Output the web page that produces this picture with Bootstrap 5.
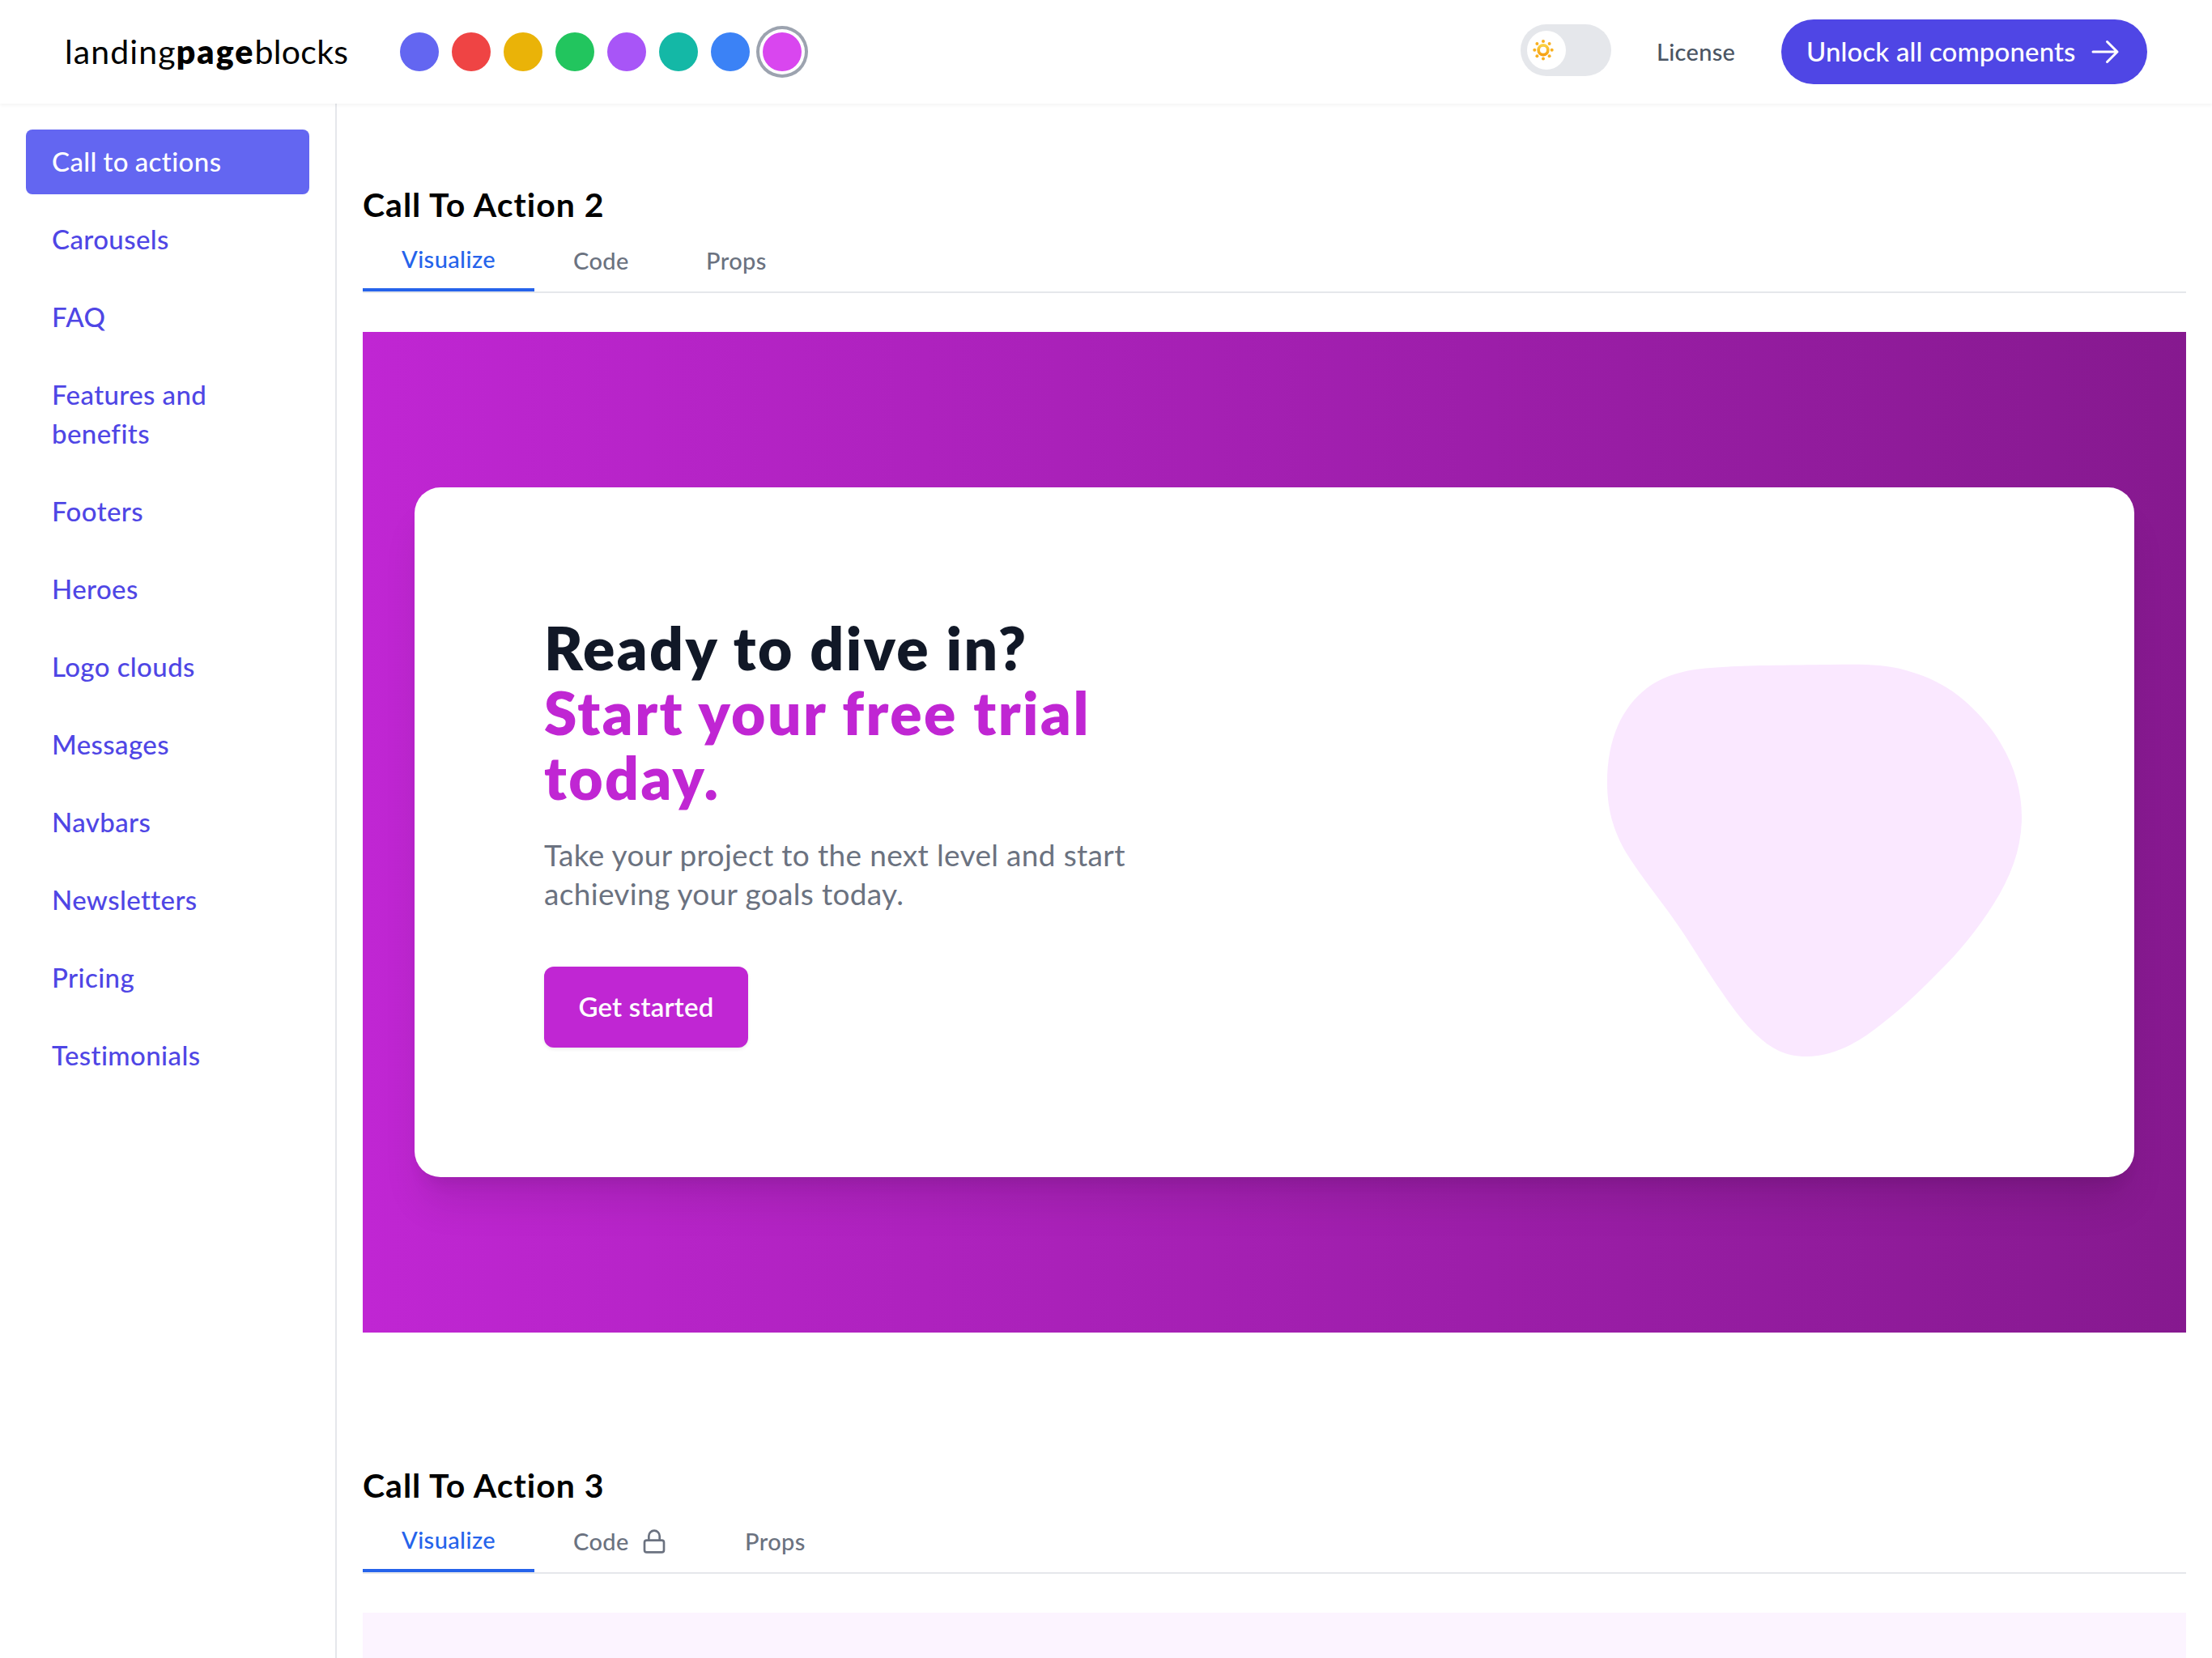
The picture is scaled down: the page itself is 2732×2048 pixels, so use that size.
<!DOCTYPE html>
<html lang="en">
<head>
  <meta charset="UTF-8" />
  <title>landingpageblocks - Call to actions</title>
  <meta name="viewport" content="width=device-width, initial-scale=1" />
  <link href="https://cdn.jsdelivr.net/npm/bootstrap@5.3.0/dist/css/bootstrap.min.css" rel="stylesheet" />
  <style>
    html {
      font-size: 32px;
    }
    body {
      font-family: Lato, sans-serif;
      color: #000;
      background: #fff;
      height: 100vh;
      overflow: hidden;
    }
    .site-header {
      height: 128px;
      padding: 0 80px;
      box-shadow: 0 2px 4px rgba(0, 0, 0, 0.05);
      z-index: 2;
    }
    .brand {
      width: 414px;
      font-size: 41px;
      line-height: 56px;
      letter-spacing: 0.3px;
      margin-top: -1px;
    }
    .brand-start {
      letter-spacing: 1.1px;
    }
    .brand strong {
      font-weight: 800;
      letter-spacing: 2.1px;
    }
    .swatch {
      width: 48px;
      height: 48px;
      border: 0;
    }
    .swatch.selected {
      box-shadow: 0 0 0 4px #fff, 0 0 0 8px #9ca3af;
    }
    .swatch-indigo { background: #6366f1; }
    .swatch-red { background: #ef4444; }
    .swatch-yellow { background: #eab308; }
    .swatch-green { background: #22c55e; }
    .swatch-purple { background: #a855f7; }
    .swatch-teal { background: #14b8a6; }
    .swatch-blue { background: #3b82f6; }
    .swatch-fuchsia { background: #d946ef; }
    .theme-toggle {
      width: 112px;
      height: 64px;
      padding: 8px;
      margin: 0 56px 4px 0;
      background: #e5e7eb;
    }
    .theme-knob {
      width: 48px;
      height: 48px;
    }
    .license-link {
      width: 97px;
      margin-right: 57px;
      font-size: 29px;
      font-weight: 500;
      letter-spacing: 0.3px;
      color: #4b5563;
    }
    .btn-unlock {
      width: 452px;
      height: 80px;
      padding: 0 32px 0 31px;
      font-size: 33px;
      font-weight: 500;
      letter-spacing: 0.12px;
      color: #fff;
      background: #4f46e5;
    }
    .sidebar {
      width: 416px;
      padding: 32px;
      border-right: 2px solid #e5e7eb;
    }
    .sidebar .nav-link {
      padding: 15px 32px 17px;
      font-size: 33px;
      line-height: 48px;
      font-weight: 500;
      letter-spacing: 0.4px;
      color: #4f46e5;
      border-radius: 8px;
    }
    .sidebar .nav-link.active {
      color: #fff;
      background: #6366f1;
      word-spacing: -1px;
    }
    .content {
      min-width: 0;
      padding: 93px 32px 0;
    }
    .block {
      margin-bottom: 157px;
    }
    .block:last-child {
      margin-bottom: 0;
    }
    .block-title {
      margin: 0;
      font-size: 41px;
      line-height: 63px;
      font-weight: 700;
      letter-spacing: 1px;
    }
    .block-tabs {
      height: 78px;
      margin-bottom: 48px;
      border-bottom: 2px solid #e5e7eb;
    }
    .block-tab {
      gap: 16px;
      padding: 0 48px;
      font-size: 29px;
      font-weight: 500;
      line-height: 40px;
      letter-spacing: 0.4px;
      color: #6b7280;
      text-decoration: none;
    }
    .block-tab.active {
      width: 212px;
      color: #2563eb;
      border-bottom: 4px solid #2563eb;
    }
    .tab-code { width: 164px; }
    .tab-code.locked {
      width: 212px;
      gap: 15px;
    }
    .preview-cta {
      padding: 192px 64px;
      background: linear-gradient(to right, #c026d3, #86198f);
    }
    .cta-card {
      height: 852px;
      padding: 0 96px 0 160px;
      border-radius: 32px;
      box-shadow: 0 40px 50px -10px rgba(0, 0, 0, 0.1), 0 16px 20px -12px rgba(0, 0, 0, 0.1);
    }
    .cta-copy {
      width: 742px;
    }
    .cta-copy h2 {
      margin: -2px 0 32px;
      font-size: 73px;
      line-height: 80px;
      font-weight: 800;
      letter-spacing: 2.5px;
      color: #111827;
    }
    .cta-copy h2 span {
      color: #c026d3;
    }
    .cta-copy p {
      margin: 0 0 66px;
      font-size: 37px;
      line-height: 48px;
      letter-spacing: 0.33px;
      color: #6b7280;
    }
    .btn-start {
      width: 252px;
      height: 100px;
      padding: 0;
      font-size: 33px;
      font-weight: 600;
      letter-spacing: 0.2px;
      color: #fff;
      background: #c026d3;
      border-radius: 12px;
      box-shadow: 0 2px 4px rgba(0, 0, 0, 0.08);
    }
    .preview-light {
      height: 56px;
      background: #fcf4ff;
    }
  </style>
</head>
<body class="d-flex flex-column">
  <header class="site-header d-flex align-items-center flex-shrink-0 bg-white position-relative">
    <div class="brand text-nowrap"><span class="brand-start">landing</span><strong>page</strong>blocks</div>
    <div class="d-flex gap-2">
      <button class="swatch rounded-circle swatch-indigo" aria-label="Indigo"></button>
      <button class="swatch rounded-circle swatch-red" aria-label="Red"></button>
      <button class="swatch rounded-circle swatch-yellow" aria-label="Yellow"></button>
      <button class="swatch rounded-circle swatch-green" aria-label="Green"></button>
      <button class="swatch rounded-circle swatch-purple" aria-label="Purple"></button>
      <button class="swatch rounded-circle swatch-teal" aria-label="Teal"></button>
      <button class="swatch rounded-circle swatch-blue" aria-label="Blue"></button>
      <button class="swatch rounded-circle swatch-fuchsia selected" aria-label="Fuchsia"></button>
    </div>
    <div class="d-flex align-items-center ms-auto">
      <div class="theme-toggle rounded-pill">
        <div class="theme-knob rounded-circle bg-white">
          <svg class="d-block" width="48" height="48" viewBox="0 0 48 48">
            <defs>
              <linearGradient id="sun" x1="0" y1="0" x2="0" y2="1">
                <stop offset="0" stop-color="#fcd84a" />
                <stop offset="1" stop-color="#f59a0c" />
              </linearGradient>
            </defs>
            <path fill="url(#sun)" fill-rule="evenodd" d="M20 16a7.7 7.7 0 1 0 0 15.4a7.7 7.7 0 1 0 0-15.4zM20 19.7a4 4 0 1 1 0 8a4 4 0 1 1 0-8z" />
            <g fill="#f8b020">
              <circle cx="20" cy="13" r="2" />
              <circle cx="20" cy="34.4" r="2" />
              <circle cx="9.3" cy="23.7" r="2" />
              <circle cx="30.7" cy="23.7" r="2" />
              <circle cx="12.4" cy="16.1" r="2" />
              <circle cx="27.6" cy="16.1" r="2" />
              <circle cx="12.4" cy="31.3" r="2" />
              <circle cx="27.6" cy="31.3" r="2" />
            </g>
          </svg>
        </div>
      </div>
      <a href="#" class="license-link text-decoration-none">License</a>
      <a href="#" class="btn btn-unlock rounded-pill border-0 d-flex align-items-center justify-content-between text-nowrap">
        Unlock all components
        <svg width="40" height="40" viewBox="0 0 24 24" fill="none" stroke="currentColor" stroke-width="1.8" stroke-linecap="round" stroke-linejoin="round">
          <path d="M13.5 4.5L21 12m0 0l-7.5 7.5M21 12H3" />
        </svg>
      </a>
    </div>
  </header>

  <div class="d-flex flex-grow-1">
    <nav class="sidebar nav flex-column flex-nowrap flex-shrink-0 gap-2">
      <a class="nav-link active" href="#">Call to actions</a>
      <a class="nav-link" href="#">Carousels</a>
      <a class="nav-link" href="#">FAQ</a>
      <a class="nav-link" href="#">Features and benefits</a>
      <a class="nav-link" href="#">Footers</a>
      <a class="nav-link" href="#">Heroes</a>
      <a class="nav-link" href="#">Logo clouds</a>
      <a class="nav-link" href="#">Messages</a>
      <a class="nav-link" href="#">Navbars</a>
      <a class="nav-link" href="#">Newsletters</a>
      <a class="nav-link" href="#">Pricing</a>
      <a class="nav-link" href="#">Testimonials</a>
    </nav>

    <main class="content flex-grow-1">
      <section class="block">
        <h3 class="block-title">Call To Action 2</h3>
        <div class="block-tabs d-flex">
          <a class="block-tab active d-flex align-items-center" href="#">Visualize</a>
          <a class="block-tab tab-code d-flex align-items-center" href="#">Code</a>
          <a class="block-tab d-flex align-items-center" href="#">Props</a>
        </div>
        <div class="preview-cta">
          <div class="cta-card bg-white d-flex align-items-center justify-content-between">
            <div class="cta-copy">
              <h2>Ready to dive in?<br /><span>Start your free trial today.</span></h2>
              <p>Take your project to the next level and start achieving your goals today.</p>
              <a href="#" class="btn btn-start border-0 d-flex align-items-center justify-content-center">Get started</a>
            </div>
            <svg width="600" height="576" viewBox="0 0 600 576">
              <path fill="#fae8ff" d="M187 84C214 82 270 81.500 320 81C350 81 383 79 414 88C443 96 467 108 488 127C507 144 522 162 532 180C548 207 557 237 557 269C557 306 545 341 522 377C503 407 480 436 453 462C425 491 395 518 365 539C340 556 315 565 291 565C265 565 247 555 229 538C214 524 200 505 187 486C169 460 155 437 138 411C116 378 93 351 74 322C54 292 45 262 45 227C45 173 63 134 94 110C120 91 148 86 187 84Z" />
            </svg>
          </div>
        </div>
      </section>

      <section class="block">
        <h3 class="block-title">Call To Action 3</h3>
        <div class="block-tabs d-flex">
          <a class="block-tab active d-flex align-items-center" href="#">Visualize</a>
          <a class="block-tab tab-code locked d-flex align-items-center" href="#">
            Code
            <svg class="flex-shrink-0" width="32" height="32" viewBox="0 0 24 24" fill="none" stroke="currentColor" stroke-width="2" stroke-linecap="round" stroke-linejoin="round">
              <rect x="3" y="11" width="18" height="11" rx="2" />
              <path d="M7 11V7a5 5 0 0 1 10 0v4" />
            </svg>
          </a>
          <a class="block-tab d-flex align-items-center" href="#">Props</a>
        </div>
        <div class="preview-light"></div>
      </section>
    </main>
  </div>
  <script src="https://cdn.jsdelivr.net/npm/bootstrap@5.3.0/dist/js/bootstrap.bundle.min.js"></script>
</body>
</html>
